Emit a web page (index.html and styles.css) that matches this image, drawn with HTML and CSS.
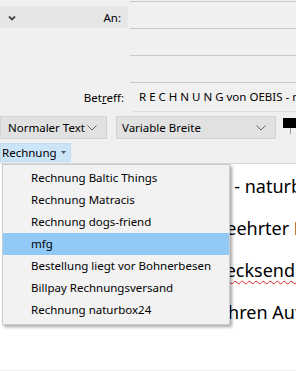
FILE: index.html
```html
<!DOCTYPE html>
<html>
<head>
    <meta charset="UTF-8">
    <meta name="viewport" content="width=device-width, initial-scale=1.0">
    <title>Verfassen</title>
    <link rel="stylesheet" href="styles.css">
</head>
<body>
    <div class="compose">
        <div class="addr">
            <div class="addr-left">
                <div class="an-box">
                    <svg class="an-chev" width="8" height="6" viewBox="0 0 8 6"><path d="M1 1.5l3 3 3-3" fill="none" stroke="#444" stroke-width="1.8"/></svg>
                    <span>An:</span>
                </div>
            </div>
            <div class="addr-fields">
                <div class="field"></div>
                <div class="field"></div>
                <div class="field"></div>
            </div>
        </div>

        <div class="subject">
            <label class="subject-label">Bet<u>r</u>eff:</label>
            <div class="subject-val">R E C H N U N G von OEBIS - naturbox24</div>
        </div>

        <div class="format-bar">
            <div class="select select-para">
                <span>Normaler Text</span>
                <svg width="10" height="6" viewBox="0 0 10 6"><path d="M0.5 0.5l4.5 4.5 4.5-4.5" fill="none" stroke="#666" stroke-width="1"/></svg>
            </div>
            <div class="select select-font">
                <span>Variable Breite</span>
                <svg width="10" height="6" viewBox="0 0 10 6"><path d="M0.5 0.5l4.5 4.5 4.5-4.5" fill="none" stroke="#666" stroke-width="1"/></svg>
            </div>
            <div class="colors">
                <div class="color-fg"></div>
                <div class="color-tick"></div>
            </div>
        </div>

        <div class="tpl-bar">
            <button class="tpl-btn">Rechnung<svg width="5" height="3" viewBox="0 0 5 3"><path d="M0 0h5L2.5 3z" fill="#555"/></svg></button>
        </div>

        <div class="editor">
            <p>Eure Bestellung bei OEBIS. - naturbox24</p>
            <p>Hey, und guten Tag sehr geehrter Kunde,</p>
            <p>anbei die Rechnung zur <span class="misspelled">Stecksendung</span></p>
            <p>Vielen Dank noch mal für Ihren Auftrag.</p>
        </div>

        <div class="menu">
            <div class="menu-item">Rechnung Baltic Things</div>
            <div class="menu-item">Rechnung Matracis</div>
            <div class="menu-item">Rechnung dogs-friend</div>
            <div class="menu-item active">mfg</div>
            <div class="menu-item">Bestellung liegt vor Bohnerbesen</div>
            <div class="menu-item">Billpay Rechnungsversand</div>
            <div class="menu-item">Rechnung naturbox24</div>
        </div>
    </div>
</body>
</html>
```

FILE: styles.css
```css
body {
    margin: 0;
    padding: 0;
    background-color: #f0f0f0;
    font-family: "Segoe UI", "Noto Sans", sans-serif;
    font-size: 11.5px;
    color: #000;
    overflow: hidden;
}

.compose {
    position: relative;
    height: 371px;
}

/* address area */

.addr {
    display: flex;
}

.addr-left {
    width: 130px;
    flex: none;
}

.an-box {
    margin-top: 6px;
    width: 128px;
    height: 22px;
    box-sizing: border-box;
    background-color: #e6e6e6;
    border: 1px solid #e9e9e9;
    display: flex;
    align-items: center;
    justify-content: space-between;
    padding: 0 6px 0 7px;
}

.an-chev {
    margin-top: 1px;
}

.addr-fields {
    flex: 1;
    border-top: 1px solid #c9c9c9;
    margin-top: 1px;
}

.field {
    height: 26px;
    border-bottom: 1px solid #c9c9c9;
}

/* subject */

.subject {
    display: flex;
    height: 29px;
    align-items: stretch;
}

.subject-label {
    width: 130px;
    flex: none;
    text-align: right;
    padding-right: 6px;
    box-sizing: border-box;
    line-height: 29px;
}

.subject-val {
    flex: 1;
    margin-left: 3px;
    padding-left: 6px;
    line-height: 28px;
    white-space: nowrap;
    overflow: hidden;
    border-bottom: 1px solid #dcdcdc;
}

/* format toolbar */

.format-bar {
    display: flex;
    margin-top: 4px;
    height: 23px;
}

.select {
    height: 23px;
    box-sizing: border-box;
    background-color: #e1e1e1;
    border: 1px solid #d4d4d4;
    display: flex;
    align-items: center;
    justify-content: space-between;
    padding: 0 9px 0 7px;
    white-space: nowrap;
}

.select-para {
    width: 107px;
}

.select-font {
    width: 160px;
    margin-left: 9px;
    padding-left: 5px;
}

.colors {
    margin-left: 7px;
    flex: 1;
}

.color-fg {
    margin-top: 2px;
    height: 10px;
    background-color: #000;
}

.color-tick {
    width: 1px;
    height: 6px;
    margin-left: 7px;
    background-color: #9a9a9a;
}

/* template button */

.tpl-bar {
    margin-top: 4px;
    height: 20px;
}

.tpl-btn {
    font: inherit;
    height: 19px;
    padding: 0 4px 0 1px;
    margin: 0;
    background-color: #cce4f7;
    border: 1px solid #c2dcf2;
    color: #000;
    display: flex;
    align-items: center;
    gap: 4px;
    white-space: nowrap;
}

/* editor */

.editor {
    background-color: #fff;
    border-top: 1px solid #dadada;
    height: 207px;
    padding: 11px 0 0 5px;
    box-sizing: border-box;
    font-size: 18px;
    line-height: 22px;
    white-space: nowrap;
    overflow: hidden;
}

.editor p {
    margin: 0 0 20px 0;
}

.misspelled {
    text-decoration: underline wavy #e02020;
    text-decoration-thickness: 1px;
    text-underline-offset: 3px;
}

/* template menu */

.menu {
    position: absolute;
    left: 2px;
    top: 164px;
    width: 228px;
    box-sizing: border-box;
    background-color: #f2f2f2;
    border: 1px solid #cccccc;
    padding: 2px 0 3px 0;
    box-shadow: 2px 2px 3px rgba(0, 0, 0, 0.35);
}

.menu-item {
    height: 22px;
    line-height: 22px;
    padding-left: 28px;
    white-space: nowrap;
}

.menu-item.active {
    background-color: #91c9f7;
}
```
